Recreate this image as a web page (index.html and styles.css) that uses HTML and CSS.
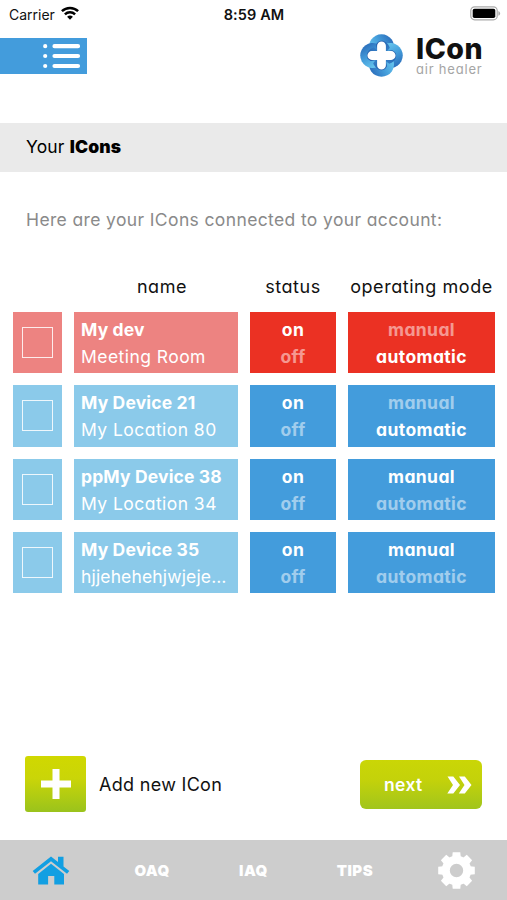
FILE: index.html
```html
<!DOCTYPE html>
<html lang="en">
<head>
<meta charset="utf-8">
<title>ICon air healer</title>
<link rel="stylesheet" href="styles.css">
</head>
<body>
<div class="status-bar">
  <div class="carrier"><span>Carrier</span>
    <svg width="18" height="14" viewBox="0 0 18 14" fill="none" stroke="#000" stroke-width="2.5"><path d="M.9 5.2a11.7 11.7 0 0 1 16.2 0M3.9 8.4a7.4 7.4 0 0 1 10.2 0"/><path d="M9 13.8 6.1 10.8a4.2 4.2 0 0 1 5.8 0z" fill="#000" stroke="none"/></svg>
  </div>
  <span class="clock">8:59 AM</span>
  <svg class="battery" width="31" height="15" viewBox="0 0 31 15"><rect x=".8" y=".8" width="26.4" height="13" rx="3.8" fill="#fff" stroke="#aaa" stroke-width="1.2"/><rect x="2.7" y="2.7" width="22.6" height="9.3" rx="1.8"/><path d="M28.4 5v4.8q1.7-.7 1.700-2.400T28.400 5z" fill="#aaa"/></svg>
</div>
<header class="header">
  <button class="menu" aria-label="Menu">
    <svg width="38" height="26" viewBox="0 0 38 26" stroke="#fff" stroke-linecap="round" stroke-width="4.200"><path d="M11.500 3.200h23.500M11.500 13h23.500M11.500 23h23.500M2.200 3.200h.01M2.200 13h.01M2.200 23h.01"/></svg>
  </button>
  <div class="brand">
    <svg width="43" height="43" viewBox="0 0 44 44">
      <defs>
        <linearGradient id="ribbon" x1="0" y1=".8" x2="1" y2=".3"><stop offset="0" stop-color="#6ccbf0"/><stop offset=".5" stop-color="#459edb"/><stop offset="1" stop-color="#2a6cba"/></linearGradient>
        <linearGradient id="fold" x1="0" y1="0" x2="1" y2="1"><stop offset="0" stop-color="#1b50a1"/><stop offset="1" stop-color="#3b8bd0"/></linearGradient>
        <path id="lobe" d="M10 17.500A12.800 12.800 0 1 1 34 17.500L22 22z" fill="url(#ribbon)"/>
        <path id="inner" d="M16.500 11C19 5 27 5.500 30.500 14L26 20H18z" fill="url(#fold)"/>
      </defs>
      <circle cx="22" cy="22" r="16" fill="#3a88cd"/>
      <use href="#lobe"/><use href="#lobe" transform="rotate(90 22 22)"/><use href="#lobe" transform="rotate(180 22 22)"/><use href="#lobe" transform="rotate(270 22 22)"/>
      <use href="#inner"/><use href="#inner" transform="rotate(90 22 22)"/><use href="#inner" transform="rotate(180 22 22)"/><use href="#inner" transform="rotate(270 22 22)"/>
      <path d="M22 12.100v19.800M12.100 22h19.800" stroke="#fff" stroke-width="9" stroke-linecap="round"/>
      <path d="M22 15.500 28.500 22 22 28.500 15.500 22z" fill="#fff"/>
    </svg>
    <div class="brand-text"><div class="brand-name">ICon</div><div class="brand-sub">air healer</div></div>
  </div>
</header>
<h1 class="title"><span>Your</span> <b>ICons</b></h1>
<main class="content">
  <p class="intro">Here are your ICons connected to your account:</p>
  <div class="devices">
    <span></span><span class="head">name</span><span class="head status-head">status</span><span class="head mode-head">operating mode</span>

    <div class="check alert-soft"><i></i></div>
    <div class="device alert-soft"><b>My dev</b><span class="place">Meeting Room</span></div>
    <div class="option alert"><span>on</span><span class="dim">off</span></div>
    <div class="option alert"><span class="dim">manual</span><span>automatic</span></div>

    <div class="check soft"><i></i></div>
    <div class="device soft"><b>My Device 21</b><span class="place">My Location 80</span></div>
    <div class="option blue"><span>on</span><span class="dim">off</span></div>
    <div class="option blue"><span class="dim">manual</span><span>automatic</span></div>

    <div class="check soft"><i></i></div>
    <div class="device soft"><b>ppMy Device 38</b><span class="place">My Location 34</span></div>
    <div class="option blue"><span>on</span><span class="dim">off</span></div>
    <div class="option blue"><span>manual</span><span class="dim">automatic</span></div>

    <div class="check soft"><i></i></div>
    <div class="device soft"><b>My Device 35</b><span class="place long">hjjehehehjwjeje…</span></div>
    <div class="option blue"><span>on</span><span class="dim">off</span></div>
    <div class="option blue"><span>manual</span><span class="dim">automatic</span></div>
  </div>
</main>
<div class="actions">
  <button class="add" aria-label="Add"><svg width="30" height="30" viewBox="0 0 30 30" stroke="#fff" stroke-width="7"><path d="M15 0v30M0 15h30"/></svg></button>
  <span class="add-label">Add new ICon</span>
  <button class="next"><span>next</span><svg width="25" height="18" viewBox="0 0 25 18" fill="#fff"><path d="M.5.5H6.300L13 9 6.300 17.500H.3L6 9zM12 .5H17.800L24.500 9 17.800 17.500H11.800L17.500 9z"/></svg></button>
</div>
<nav class="tabs">
  <a><svg width="38" height="29" viewBox="0 0 38 29" fill="#129fe2"><path d="M19 .5 26 6V.8h5.500v9.600L37.300 15 35 17.700 19 5.200 3 17.700.7 15z"/><path d="M19 7.700 32 18v10.500H22.300V20h-6.200v8.500H6.200V18z"/></svg></a>
  <a>OAQ</a><a>IAQ</a><a>TIPS</a>
  <a><svg width="37" height="37" viewBox="-18.500 -18.500 37 37"><defs><path id="tooth" d="M-4.500-11-3.800-18.300H3.800L4.500-11z"/></defs><g fill="#fff"><use href="#tooth"/><use href="#tooth" transform="rotate(45)"/><use href="#tooth" transform="rotate(90)"/><use href="#tooth" transform="rotate(135)"/><use href="#tooth" transform="rotate(180)"/><use href="#tooth" transform="rotate(225)"/><use href="#tooth" transform="rotate(270)"/><use href="#tooth" transform="rotate(315)"/></g><circle r="10.700" fill="none" stroke="#fff" stroke-width="8"/></svg></a>
</nav>
</body>
</html>
```
FILE: styles.css
```css
* { box-sizing: border-box; }
body {
  margin: 0;
  height: 900px;
  display: flex;
  flex-direction: column;
  overflow: hidden;
  background: #fff;
  color: #111;
  font-family: Inter, "Liberation Sans", sans-serif;
  font-feature-settings: "cv11";
  font-size: 17.5px;
}
button { border: 0; padding: 0; font: inherit; color: inherit; font-feature-settings: inherit; }
svg { display: block; flex: none; }
.status-bar {
  height: 28px;
  padding: 0 6px 0 9px;
  display: grid;
  grid-template-columns: 1fr auto 1fr;
  align-items: center;
  font-feature-settings: normal;
  font-size: 14px;
}
.carrier { display: flex; align-items: center; gap: 6px; }
.carrier svg { margin-top: -3px; }
.clock { margin-left: -2px; font-weight: 600; font-size: 14.500px; letter-spacing: .1px; }
.battery { justify-self: end; margin-top: -2px; }
.header { height: 95px; display: flex; justify-content: space-between; align-items: flex-start; padding: 6px 24px 0 0; }
.menu { width: 87px; height: 36px; margin-top: 4px; padding-right: 6px; background: #439cdc; display: flex; align-items: center; justify-content: flex-end; }
.brand { display: flex; gap: 13px; }
.brand-text { width: 67px; white-space: nowrap; }
.brand-name { font-size: 28.500px; line-height: 30px; font-weight: 800; letter-spacing: .5px; color: #111; }
.brand-sub { font-size: 13px; line-height: 11px; letter-spacing: .8px; color: #a5a5a5; }
.title { margin: 0; height: 49px; padding: 0 26px; background: #eaeaea; font-size: 17.500px; font-weight: 400; line-height: 48px; letter-spacing: .15px; color: #000; }
.title b { font-weight: 900; }
.content { flex: 1; }
.intro { margin: 36px 26px 0; line-height: 24px; letter-spacing: .37px; color: #8a8a8a; white-space: nowrap; }
.devices {
  margin: 43px 12px 0 13px;
  display: grid;
  grid-template-columns: 49px 164px 86px 147px;
  grid-template-rows: 25px repeat(4, 61.300px);
  gap: 12px;
}
.head { text-align: center; font-size: 18px; line-height: 23px; letter-spacing: .55px; white-space: nowrap; margin: 0 -6px; }
.head:nth-child(2) { padding-left: 12px; }
.check { display: flex; align-items: center; justify-content: center; }
.check i { width: 31px; height: 31px; border: 1px solid rgba(255, 255, 255, .85); }
.device { padding: 4px 7px; color: #fff; display: flex; flex-direction: column; line-height: 27px; white-space: nowrap; }
.device b { font-weight: 700; letter-spacing: .15px; }
.place { letter-spacing: .45px; }
.place.long { letter-spacing: .15px; }
.option { padding-top: 4px; color: #fff; display: flex; flex-direction: column; align-items: center; line-height: 27px; font-weight: 700; letter-spacing: .4px; }
.dim { opacity: .5; }
.alert-soft { background: #ed8381; }
.alert { background: #eb3123; }
.soft { background: #8bcaea; }
.blue { background: #439cdc; }
.actions { height: 84px; padding: 0 25px; display: flex; align-items: flex-start; }
.add { width: 61px; height: 56px; border-radius: 3px; background: linear-gradient(#d0d800, #cad508 40%, #9ac31c); display: flex; align-items: center; justify-content: center; }
.add-label { margin-left: 13px; font-size: 18px; line-height: 57px; letter-spacing: .3px; flex: 1; }
.next { width: 122px; height: 49px; margin-top: 4px; padding: 0 10px 0 24px; border-radius: 6px; background: linear-gradient(#cad606, #c4d20a 40%, #a1c51c); display: flex; justify-content: space-between; align-items: center; color: #fff; font-weight: 600; letter-spacing: .4px; }
.tabs { height: 60px; background: #cdcdcd; display: grid; grid-template-columns: repeat(5, 1fr); color: #fff; font-size: 15px; font-weight: 900; letter-spacing: .5px; }
.tabs a { display: flex; align-items: center; justify-content: center; }
```
